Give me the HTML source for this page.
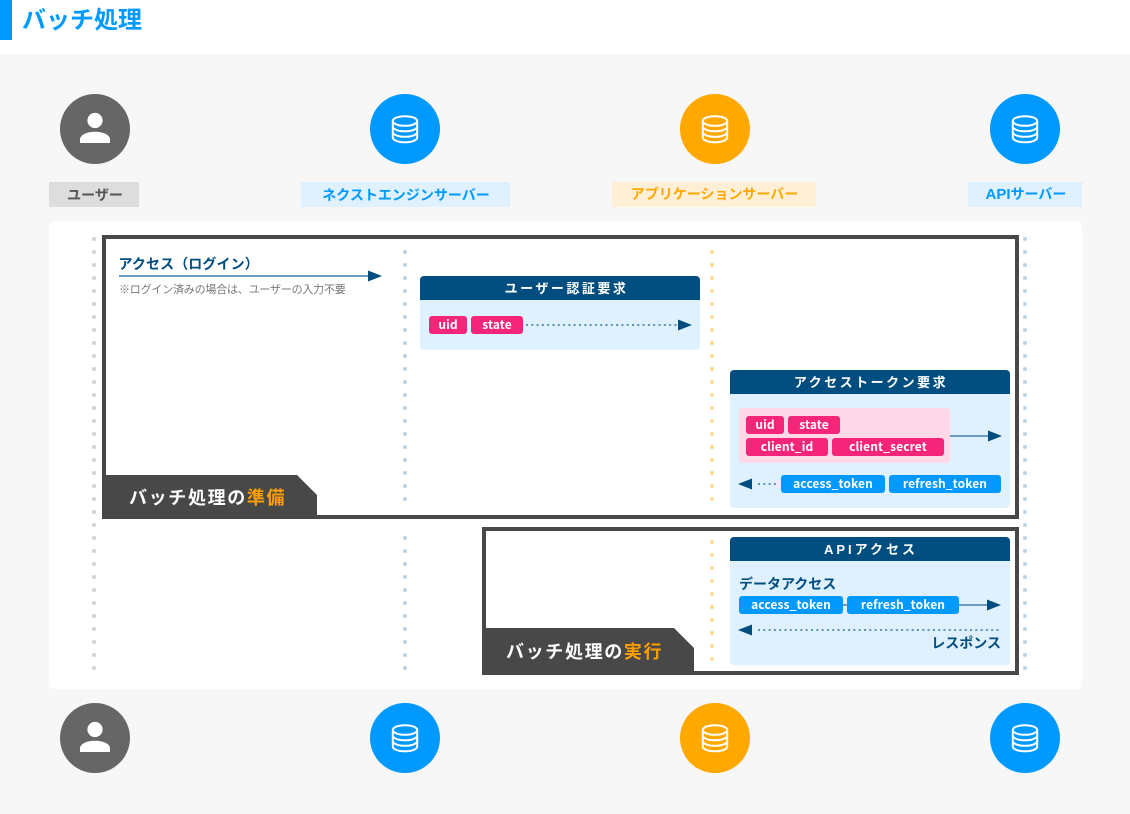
<!DOCTYPE html>
<html lang="ja"><head><meta charset="utf-8"><title>バッチ処理</title>
<style>
html,body{margin:0;padding:0;background:#fff;width:1130px;height:814px;overflow:hidden}
svg{display:block}
text{font-family:"Noto Sans CJK JP","Liberation Sans",sans-serif;font-weight:700}
.lbl{font-size:14px;text-anchor:middle}
.hd{font-size:13px;fill:#fff;text-anchor:middle;letter-spacing:2.5px}
.pill{font-size:12px;fill:#fff;text-anchor:middle;letter-spacing:.1px}
.nv{font-size:14px;fill:#004d80}
.tab{font-size:18px;fill:#fff;letter-spacing:1.65px}
.or{fill:#ffa000}
.ls{font-family:"Liberation Sans",sans-serif}
</style></head><body>
<svg width="1130" height="814" viewBox="0 0 1130 814" xmlns="http://www.w3.org/2000/svg">
<defs>
<symbol id="db" viewBox="0 0 70 70" width="70" height="70">
<g fill="none" stroke="#fff" stroke-width="2">
<ellipse cx="35" cy="27" rx="12.2" ry="4.8"/>
<path d="M22.8 27v16.5c0 2.7 5.5 4.8 12.200 4.800s12.200-2.100 12.200-4.800V27"/>
<path d="M22.8 32.500c0 2.700 5.500 4.800 12.200 4.800s12.200-2.100 12.200-4.800"/>
<path d="M22.800 38c0 2.700 5.500 4.800 12.200 4.800s12.200-2.100 12.200-4.800"/>
</g></symbol>
<symbol id="us" viewBox="0 0 70 70" width="70" height="70">
<circle cx="35" cy="26.500" r="7.600" fill="#fff"/>
<path d="M20 49v-3.500c0-5 7.500-7.800 15-7.800s15 2.800 15 7.800V49z" fill="#fff"/>
</symbol>
</defs>

<rect width="1130" height="814" fill="#fff"/>
<rect x="0" y="54" width="1130" height="760" fill="#f7f7f7"/>
<rect x="0" y="0" width="12" height="40" fill="#0099ff"/>
<text x="22" y="28" font-size="24" fill="#0099ff">バッチ処理</text>

<circle cx="95" cy="129" r="35" fill="#666"/><use href="#us" x="60" y="94"/>
<circle cx="405" cy="129" r="35" fill="#0099ff"/><use href="#db" x="370" y="94"/>
<circle cx="715" cy="129" r="35" fill="#ffa800"/><use href="#db" x="680" y="94"/>
<circle cx="1025" cy="129" r="35" fill="#0099ff"/><use href="#db" x="990" y="94"/>

<rect x="49" y="182" width="90" height="25" fill="#ddd"/>
<rect x="301" y="182" width="209" height="25" fill="#dff1ff"/>
<rect x="612" y="182" width="204" height="25" fill="#ffefd6"/>
<rect x="968" y="182" width="114" height="25" fill="#dff1ff"/>
<text class="lbl" x="95" y="200" fill="#555">ユーザー</text>
<text class="lbl" x="406" y="200" fill="#0099ff">ネクストエンジンサーバー</text>
<text class="lbl" x="714.500" y="199" fill="#ffa800">アプリケーションサーバー</text>
<text class="lbl" x="1026" y="199" fill="#0099ff"><tspan class="ls" font-size="15">API</tspan>サーバー</text>

<rect x="49" y="221" width="1033" height="468" rx="6" fill="#fff"/>

<!-- frames -->
<rect x="104" y="237" width="913" height="280" fill="#fff" stroke="#484848" stroke-width="4"/>
<rect x="484" y="529" width="533" height="144" fill="#fff" stroke="#484848" stroke-width="4"/>

<!-- lifelines -->
<g fill="none" stroke-width="3.500" stroke-dasharray="3.500 9.500">
<path d="M94 237.250V670" stroke="#cfcfcf"/>
<path d="M405 250.250V501M405 536.250V670" stroke="#b6d0e4"/>
<path d="M712 250.250V501M712 540.250V661" stroke="#ffd98f"/>
<path d="M1025 237.250V670" stroke="#b6d0e4"/>
</g>

<!-- tabs -->
<path d="M102 475H297L317 495V519H102z" fill="#484848"/>
<text class="tab" x="129" y="504">バッチ処理の<tspan class="or">準備</tspan></text>
<path d="M482 628H674L694 648V675H482z" fill="#484848"/>
<text class="tab" x="506" y="658">バッチ処理の<tspan class="or">実行</tspan></text>

<!-- login -->
<text class="nv" x="118.500" y="269" style="letter-spacing:.1px">アクセス（ログイン）</text>
<rect x="119" y="275" width="250" height="2" fill="#6a9cbd"/>
<path d="M368 270.500L382 276L368 281.500z" fill="#004d80"/>
<text x="119" y="293" font-size="11" fill="#777" style="font-weight:400;letter-spacing:-.2px">※ログイン済みの場合は、ユーザーの入力不要</text>

<!-- box 1 -->
<rect x="420" y="276" width="280" height="74" rx="4" fill="#dff0ff"/>
<path d="M420 300V280a4 4 0 0 1 4-4H696a4 4 0 0 1 4 4V300z" fill="#004d80"/>
<text class="hd" x="566.500" y="293">ユーザー認証要求</text>
<rect x="429" y="316" width="38" height="18" rx="3" fill="#f5267a"/>
<rect x="471" y="316" width="52" height="18" rx="3" fill="#f5267a"/>
<text class="pill" x="448" y="329">uid</text>
<text class="pill" x="497" y="329">state</text>
<path d="M526 325H678" stroke="#5e93b8" stroke-width="2" stroke-dasharray="2 3.300" fill="none"/>
<path d="M678 319.500L692 325L678 330.500z" fill="#004d80"/>

<!-- box 2 -->
<rect x="730" y="370" width="280" height="138" rx="4" fill="#dff0ff"/>
<path d="M730 394V374a4 4 0 0 1 4-4H1006a4 4 0 0 1 4 4V394z" fill="#004d80"/>
<text class="hd" x="871" y="387">アクセストークン要求</text>
<rect x="739" y="408" width="211" height="55" rx="3" fill="#ffd9e8"/>
<rect x="746" y="416" width="38" height="18" rx="3" fill="#f5267a"/>
<rect x="788" y="416" width="52" height="18" rx="3" fill="#f5267a"/>
<rect x="746" y="438" width="82" height="18" rx="3" fill="#f5267a"/>
<rect x="832" y="438" width="112" height="18" rx="3" fill="#f5267a"/>
<text class="pill" x="765" y="429">uid</text>
<text class="pill" x="814" y="429">state</text>
<text class="pill" x="787" y="451">client_id</text>
<text class="pill" x="888" y="451">client_secret</text>
<rect x="950" y="435" width="39" height="2" fill="#6a9cbd"/>
<path d="M988 430.500L1002 436L988 441.500z" fill="#004d80"/>
<path d="M738 484L752 478.500V489.500z" fill="#004d80"/>
<path d="M758 484H779" stroke="#5e93b8" stroke-width="2" stroke-dasharray="2 3.300" fill="none"/>
<rect x="781" y="475" width="104" height="18" rx="3" fill="#0099ff"/>
<rect x="889" y="475" width="112" height="18" rx="3" fill="#0099ff"/>
<text class="pill" x="833" y="488">access_token</text>
<text class="pill" x="945" y="488">refresh_token</text>

<!-- box 3 -->
<rect x="730" y="537" width="280" height="128" rx="4" fill="#dff0ff"/>
<path d="M730 561V541a4 4 0 0 1 4-4H1006a4 4 0 0 1 4 4V561z" fill="#004d80"/>
<text class="hd" x="871" y="554" style="letter-spacing:3px"><tspan class="ls">API</tspan>アクセス</text>
<text class="nv" x="739" y="589">データアクセス</text>
<rect x="843" y="604" width="4" height="2" fill="#6a9cbd"/>
<rect x="739" y="596" width="104" height="18" rx="3" fill="#0099ff"/>
<rect x="847" y="596" width="112" height="18" rx="3" fill="#0099ff"/>
<text class="pill" x="791" y="609">access_token</text>
<text class="pill" x="903" y="609">refresh_token</text>
<rect x="959" y="604" width="29" height="2" fill="#6a9cbd"/>
<path d="M987 599.500L1001 605L987 610.500z" fill="#004d80"/>
<path d="M738 630L752 624.500V635.500z" fill="#004d80"/>
<path d="M758 630H1001" stroke="#5e93b8" stroke-width="2" stroke-dasharray="2 3.300" fill="none"/>
<text class="nv" x="1001" y="648" text-anchor="end">レスポンス</text>

<!-- bottom icons -->
<circle cx="95" cy="738" r="35" fill="#666"/><use href="#us" x="60" y="703"/>
<circle cx="405" cy="738" r="35" fill="#0099ff"/><use href="#db" x="370" y="703"/>
<circle cx="715" cy="738" r="35" fill="#ffa800"/><use href="#db" x="680" y="703"/>
<circle cx="1025" cy="738" r="35" fill="#0099ff"/><use href="#db" x="990" y="703"/>
</svg>
</body></html>
